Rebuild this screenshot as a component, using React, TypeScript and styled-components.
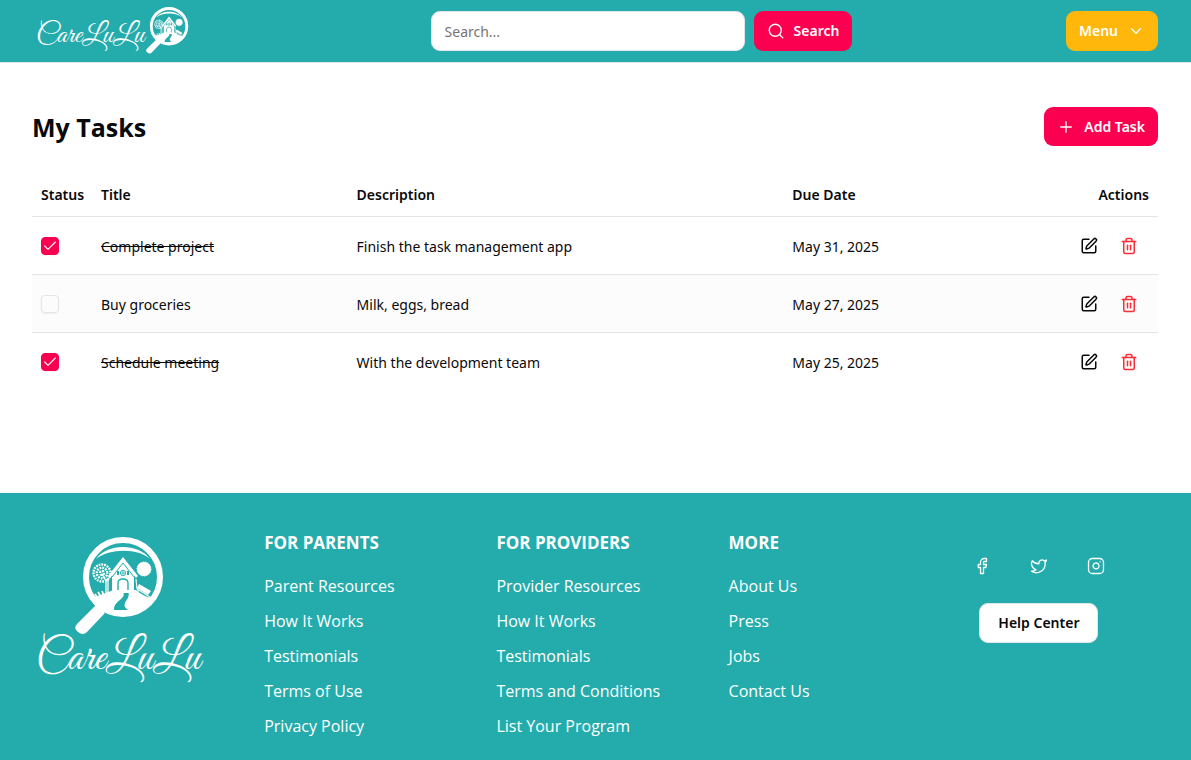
import React, { useState } from "react";
import styled, { createGlobalStyle } from "styled-components";
import {
  Check,
  ChevronDown,
  Facebook,
  Instagram,
  Plus,
  Search,
  SquarePen,
  Trash2,
  Twitter,
} from "lucide-react";

const teal = "#24abac";
const pink = "#fb0050";
const amber = "#ffb70b";
const line = "#e4e4e7";

const GlobalStyle = createGlobalStyle`
  *, *::before, *::after { box-sizing: border-box; }
  body {
    margin: 0;
    background: #fff;
    color: #09090b;
    font-family: "Segoe UI", "Noto Sans", "Open Sans", sans-serif;
    font-size: 14px;
    line-height: 20px;
  }
  button, input { font: inherit; }
  a { color: inherit; text-decoration: none; }
`;

const Page = styled.div`
  display: flex;
  flex-direction: column;
  min-height: 100vh;
`;

const Header = styled.header`
  display: flex;
  align-items: center;
  justify-content: space-between;
  padding: 6px 33px 6px 36px;
  background: ${teal};
  border-bottom: 1px solid ${line};
`;

const HeaderLogo = styled.a`
  display: flex;
  width: 181px;
  color: #fff;
`;

const SearchForm = styled.form`
  display: flex;
  gap: 9px;
`;

const SearchInput = styled.input`
  width: 314px;
  height: 40px;
  padding: 0 13px;
  border: 1px solid ${line};
  border-radius: 9px;
  background: #fff;
  color: #09090b;
  &::placeholder { color: #757575; opacity: 1; }
`;

const Button = styled.button<{ $tone: string; $dark?: boolean }>`
  display: inline-flex;
  align-items: center;
  justify-content: center;
  gap: 9px;
  height: ${(p) => (p.$dark ? 40 : 39)}px;
  padding: 0 13px;
  border: ${(p) => (p.$dark ? `1px solid ${line}` : "0")};
  border-radius: 9px;
  background: ${(p) => p.$tone};
  color: ${(p) => (p.$dark ? "#09090b" : "#fff")};
  font-weight: 600;
  cursor: pointer;
  white-space: nowrap;
`;

const BarButton = styled(Button)`
  height: 40px;
`;

const Main = styled.main`
  flex: 1;
  padding: 44px 33px 90px 32px;
`;

const TitleBar = styled.div`
  display: flex;
  align-items: center;
  justify-content: space-between;
  margin-bottom: 27px;
`;

const Title = styled.h1`
  margin: 0;
  font-family: "Segoe UI", "Open Sans", sans-serif;
  font-size: 25px;
  line-height: 32px;
  font-weight: 700;
`;

const Table = styled.table`
  width: 100%;
  table-layout: fixed;
  border-collapse: collapse;
`;

const Row = styled.tr`
  border-bottom: 1px solid ${line};
  tbody &:nth-child(even) { background: #fcfcfc; }
  tbody &:last-child { border-bottom: 0; }
`;

const HeadCell = styled.th<{ $width?: string; $right?: boolean }>`
  width: ${(p) => p.$width ?? "auto"};
  height: 43px;
  padding: 2px 9px 0;
  text-align: ${(p) => (p.$right ? "right" : "left")};
  font-weight: 600;
`;

const Cell = styled.td`
  height: 58px;
  padding: 2px 9px 0;
`;

const TextCell = styled(Cell)<{ $done?: boolean }>`
  padding-top: 4px;
  text-decoration: ${(p) => (p.$done ? "line-through" : "none")};
`;

const CheckLabel = styled.label`
  display: grid;
  width: 18px;
  height: 18px;
  color: #fff;
  cursor: pointer;
  & > * { grid-area: 1 / 1; place-self: center; }
  svg { pointer-events: none; }
`;

const CheckInput = styled.input`
  appearance: none;
  width: 18px;
  height: 18px;
  margin: 0;
  border: 1px solid ${line};
  border-radius: 4px;
  background: transparent;
  box-shadow: 0 1px 2px rgba(0, 0, 0, 0.05);
  &:checked { background: ${pink}; border-color: ${pink}; }
`;

const Actions = styled.div`
  display: flex;
  justify-content: flex-end;
`;

const IconButton = styled.button<{ $danger?: boolean }>`
  display: grid;
  place-items: center;
  width: 40px;
  height: 40px;
  padding: 0;
  border: 0;
  background: none;
  color: ${(p) => (p.$danger ? "#fb2c36" : "#09090b")};
  cursor: pointer;
`;

const Footer = styled.footer`
  display: grid;
  grid-template-columns: repeat(5, 1fr);
  gap: 36px;
  padding: 36px 36px 20px 30px;
  background: ${teal};
  color: #fff;
  font-family: "Segoe UI", "Open Sans", sans-serif;
`;

const FooterLogo = styled.a`
  display: block;
  padding: 4px 0 0 4px;
`;

const LinkColumn = styled.section`
  padding-left: 2px;
`;

const ColumnTitle = styled.h2`
  margin: 0 0 17px;
  font-size: 17px;
  line-height: 27px;
  font-weight: 700;
  text-transform: uppercase;
  white-space: nowrap;
`;

const LinkList = styled.ul`
  display: grid;
  gap: 8px;
  margin: 0;
  padding: 0;
  list-style: none;
  font-size: 16px;
  line-height: 27px;
  white-space: nowrap;
`;

const Contact = styled.div`
  display: flex;
  flex-direction: column;
  align-items: center;
  gap: 28px;
  padding: 28px 36px 0 0;
`;

const Socials = styled.div`
  display: flex;
  gap: 39px;
  a { display: flex; }
`;

const HelpButton = styled(Button)`
  padding: 0 18px;
  font-family: "Segoe UI", "Noto Sans", sans-serif;
`;

const script = '"Great Vibes", "Liberation Serif", cursive';

/* Magnifying glass over a small house scene, drawn in a 90 by 100 box. */
function Glass() {
  return (
    <g>
      <circle cx="48" cy="40" r="37" fill="none" stroke="#fff" strokeWidth="6" />
      <path d="M21 22C32 6 64 6 75 22C64 11 34 11 21 22Z" fill="#fff" />
      <path d="M21 68L30 76L12 95Q8 99 3 95Q-2 91 2 87Z" fill="#fff" />
      <path d="M18 66L24 61L34 70L27 76Z" fill="#fff" />
      <path d="M17 61Q31 56 38 53H61Q66 58 76 61Q69 77 48 77Q27 76 17 61Z" fill="#fff" />
      <path d="M47 53Q51 58 46 62Q38 68 39 73H53Q47 69 51 64Q56 58 52 53Z" fill={teal} />
      <g fill="none" stroke="#fff" strokeWidth="2.4" strokeDasharray="1.8 1">
        <circle cx="27" cy="36" r="8.5" />
        <circle cx="27" cy="36" r="5.2" strokeDashoffset="1" />
        <circle cx="27" cy="36" r="2" />
      </g>
      <path d="M27 37L31 44L35 40M31 42V57M33 43V57" stroke="#fff" strokeWidth="1.3" fill="none" />
      <path d="M37 38L48 25L59 38V56H37Z" fill="#fff" />
      <path d="M33 39L48 20L63 39L61 41L48 26L35 41Z" fill="#fff" />
      <path d="M37 40L48 26L59 40" fill="none" stroke={teal} strokeWidth="1" />
      <path d="M43 53V46Q43 42 48 42Q53 42 53 46V53" fill="none" stroke={teal} strokeWidth="1.4" />
      <path d="M42 34V38H44V34ZM52 34V38H54V34Z" fill={teal} />
      <rect x="45.5" y="33.5" width="5" height="5" rx="2" fill="none" stroke={teal} strokeWidth="0.9" />
      <path d="M48 33V39M45 36H51" stroke={teal} strokeWidth="0.8" />
      <circle cx="69" cy="32" r="7" fill="#fff" />
      <circle cx="69" cy="32" r="7" fill="none" stroke="#fff" strokeWidth="1" strokeDasharray="1.4 1" />
      <path d="M64 47L76 54L73 58L62 51Z" fill="#fff" />
      <path d="M61 42L62 52L75 60V63M63 52V56" stroke="#fff" strokeWidth="1.1" fill="none" />
      <path d="M23 62L20 57M26 60L23 55M29 59L27 54" stroke="#fff" strokeWidth="1.8" />
    </g>
  );
}

function WideLogo() {
  return (
    <svg width="154" height="50" viewBox="0 0 154 50" role="img" aria-label="CareLuLu">
      <text x="0" y="36" fill="#fff" fontFamily={script} fontSize="29">
        CareLuLu
      </text>
      <g transform="translate(110 1) scale(0.48)">
        <Glass />
      </g>
    </svg>
  );
}

function TallLogo() {
  return (
    <svg width="184" height="164" viewBox="0 0 184 164" role="img" aria-label="CareLuLu">
      <g transform="translate(41 4)">
        <Glass />
      </g>
      <text x="2" y="136" fill="#fff" fontFamily={script} fontSize="44">
        CareLuLu
      </text>
    </svg>
  );
}

const initialTasks = [
  { id: 1, title: "Complete project", text: "Finish the task management app", due: "May 31, 2025", done: true },
  { id: 2, title: "Buy groceries", text: "Milk, eggs, bread", due: "May 27, 2025", done: false },
  { id: 3, title: "Schedule meeting", text: "With the development team", due: "May 25, 2025", done: true },
];

const columns = [
  {
    title: "For Parents",
    links: ["Parent Resources", "How It Works", "Testimonials", "Terms of Use", "Privacy Policy"],
  },
  {
    title: "For Providers",
    links: ["Provider Resources", "How It Works", "Testimonials", "Terms and Conditions", "List Your Program"],
  },
  { title: "More", links: ["About Us", "Press", "Jobs", "Contact Us"] },
];

export default function App() {
  const [tasks, setTasks] = useState(initialTasks);
  const toggle = (id: number) =>
    setTasks((all) => all.map((t) => (t.id === id ? { ...t, done: !t.done } : t)));

  return (
    <Page>
      <GlobalStyle />
      <Header>
        <HeaderLogo href="#"><WideLogo /></HeaderLogo>
        <SearchForm onSubmit={(e) => e.preventDefault()}>
          <SearchInput type="text" placeholder="Search..." aria-label="Search" />
          <BarButton $tone={pink} type="submit">
            <Search size={18} strokeWidth={1.75} />
            Search
          </BarButton>
        </SearchForm>
        <BarButton $tone={amber} type="button">
          Menu
          <ChevronDown size={18} strokeWidth={1.75} />
        </BarButton>
      </Header>

      <Main>
        <TitleBar>
          <Title>My Tasks</Title>
          <Button $tone={pink} type="button">
            <Plus size={18} strokeWidth={1.75} />
            Add Task
          </Button>
        </TitleBar>
        <Table>
          <thead>
            <Row>
              <HeadCell $width="60px">Status</HeadCell>
              <HeadCell $width="22.7%">Title</HeadCell>
              <HeadCell $width="38.7%">Description</HeadCell>
              <HeadCell>Due Date</HeadCell>
              <HeadCell $right>Actions</HeadCell>
            </Row>
          </thead>
          <tbody>
            {tasks.map((t) => (
              <Row key={t.id}>
                <Cell>
                  <CheckLabel>
                    <CheckInput
                      type="checkbox"
                      checked={t.done}
                      onChange={() => toggle(t.id)}
                      aria-label={t.title}
                    />
                    {t.done && <Check size={16} strokeWidth={1.75} />}
                  </CheckLabel>
                </Cell>
                <TextCell $done={t.done}>{t.title}</TextCell>
                <TextCell>{t.text}</TextCell>
                <TextCell>{t.due}</TextCell>
                <Cell>
                  <Actions>
                    <IconButton type="button" aria-label={`Edit ${t.title}`}>
                      <SquarePen size={18} />
                    </IconButton>
                    <IconButton type="button" $danger aria-label={`Delete ${t.title}`}>
                      <Trash2 size={18} />
                    </IconButton>
                  </Actions>
                </Cell>
              </Row>
            ))}
          </tbody>
        </Table>
      </Main>

      <Footer>
        <FooterLogo href="#"><TallLogo /></FooterLogo>
        {columns.map((c) => (
          <LinkColumn key={c.title}>
            <ColumnTitle>{c.title}</ColumnTitle>
            <LinkList>
              {c.links.map((l) => (
                <li key={l}><a href="#">{l}</a></li>
              ))}
            </LinkList>
          </LinkColumn>
        ))}
        <Contact>
          <Socials>
            <a href="#" aria-label="Facebook"><Facebook size={18} strokeWidth={1.75} /></a>
            <a href="#" aria-label="Twitter"><Twitter size={18} strokeWidth={1.75} /></a>
            <a href="#" aria-label="Instagram"><Instagram size={18} strokeWidth={1.75} /></a>
          </Socials>
          <HelpButton $tone="#fff" $dark type="button">Help Center</HelpButton>
        </Contact>
      </Footer>
    </Page>
  );
}
